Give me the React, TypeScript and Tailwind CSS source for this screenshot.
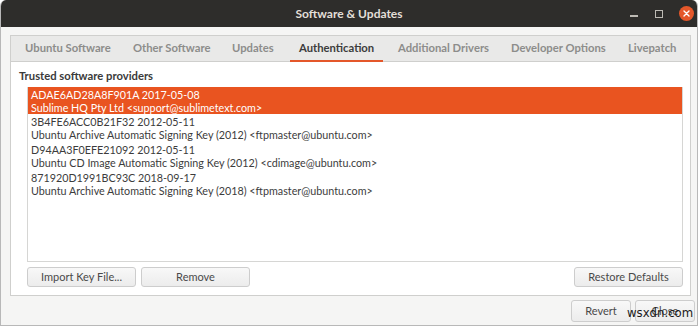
import React from "react";

const font = { fontFamily: 'Lato, "Noto Sans", sans-serif' };

const tabs: [string, number][] = [
  ["Ubuntu Software", 108],
  ["Other Software", 99],
  ["Updates", 67],
  ["Authentication", 99],
  ["Additional Drivers", 113],
  ["Developer Options", 117],
  ["Livepatch", 60],
];

const keys = [
  ["ADAE6AD28A8F901A 2017-05-08", "Sublime HQ Pty Ltd <support@sublimetext.com>"],
  ["3B4FE6ACC0B21F32 2012-05-11", "Ubuntu Archive Automatic Signing Key (2012) <ftpmaster@ubuntu.com>"],
  ["D94AA3F0EFE21092 2012-05-11", "Ubuntu CD Image Automatic Signing Key (2012) <cdimage@ubuntu.com>"],
  ["871920D1991BC93C 2018-09-17", "Ubuntu Archive Automatic Signing Key (2018) <ftpmaster@ubuntu.com>"],
];

function Btn({ children, className = "" }: { children: React.ReactNode; className?: string }) {
  return (
    <div
      className={
        "flex items-center justify-center rounded-[3px] border border-[#cdcdcd] bg-gradient-to-b from-[#f8f8f8] to-[#ececec] text-[11px] text-[#4a4a4a] whitespace-nowrap " +
        className
      }
    >
      {children}
    </div>
  );
}

export default function App() {
  return (
    <div className="relative w-[700px] h-[326px] bg-white overflow-hidden" style={font}>
      <div className="flex flex-col w-[698px] h-[326px] border-l border-r border-b border-[#b8b8b8] bg-[#f5f5f4] rounded-t-[6px] overflow-hidden">
        {/* Title bar */}
        <div className="relative flex items-center justify-center h-[27px] bg-[#2e2d2b] shrink-0">
          <span className="text-[12px] font-bold text-[#e3dfd8]">Software &amp; Updates</span>
          <div className="absolute right-[3px] top-0 h-[27px] flex items-center gap-[10px]">
            <div className="w-[8px] h-[1.5px] bg-[#bdbab4] mt-[5px]" />
            <div className="w-[8px] h-[8px] border-[1.5px] border-[#bdbab4] ml-[7px]" />
            <div className="w-[15px] h-[15px] rounded-full bg-[#e4572a] flex items-center justify-center ml-[6px]">
              <svg width="7" height="7" viewBox="0 0 7 7">
                <path d="M1 1 L6 6 M6 1 L1 6" stroke="#fff" strokeWidth="1.4" strokeLinecap="round" />
              </svg>
            </div>
          </div>
        </div>

        {/* Body */}
        <div className="flex flex-col pl-[9px] pt-[8px]">
          {/* Notebook */}
          <div className="flex flex-col border border-[#cfcfcd] bg-white w-[681px] h-[261px]">
            <div className="flex h-[26px] bg-[#e9e9e8] border-b border-[#cfcfcd] pl-[14px]">
              {tabs.map(([t, w]) => (
                <div
                  key={t}
                  style={{ width: w }}
                  className={
                    "relative flex items-center shrink-0 whitespace-nowrap text-[11.25px] font-bold " +
                    (t === "Authentication" ? "text-[#3c3c3c]" : "text-[#8d8d8b]")
                  }
                >
                  {t === "Authentication" && (
                    <div className="absolute left-[-9px] w-[93px] bottom-[-1px] h-[2px] bg-[#e4572a]" />
                  )}
                  {t}
                </div>
              ))}
            </div>
            <div className="flex flex-col pl-[8px] pr-[7px] pt-[6px]">
              <div className="text-[11.25px] font-bold text-[#3a3a3a] leading-[16px] whitespace-nowrap">
                Trusted software providers
              </div>
              <div className="ml-[8px] mt-[3px] h-[175px] border-x border-b border-[#d6d6d4] bg-white flex flex-col">
                {keys.map(([a, b], i) => (
                  <div
                    key={a}
                    className={
                      "flex flex-col pl-[3px] justify-center text-[10.75px] leading-[13px] whitespace-nowrap " +
                      (i === 0 ? "bg-[#e95420] text-white h-[27px]" : "text-[#3c3c3c] h-[28px]")
                    }
                  >
                    <span>{a}</span>
                    <span>{b}</span>
                  </div>
                ))}
              </div>
              <div className="flex ml-[8px] mt-[5px] h-[20px] gap-[5px]">
                <Btn className="w-[109px]">Import Key File...</Btn>
                <Btn className="w-[109px]">Remove</Btn>
                <div className="flex-1" />
                <Btn className="w-[109px]">Restore Defaults</Btn>
              </div>
            </div>
          </div>
        </div>
        {/* Bottom buttons */}
        <div className="flex justify-end gap-[4px] mt-[4px] pr-[2px]">
          <Btn className="w-[60px] h-[22px]">Revert</Btn>
          <Btn className="w-[60px] h-[22px]">Close</Btn>
        </div>
      </div>
      <div
        className="absolute left-[627px] top-[305px] text-[13px] text-[#1a1a1a] leading-[16px]"
        style={{ fontFamily: '"DejaVu Sans Condensed", "DejaVu Sans", sans-serif' }}
      >
        wsxdn.com
      </div>
    </div>
  );
}
